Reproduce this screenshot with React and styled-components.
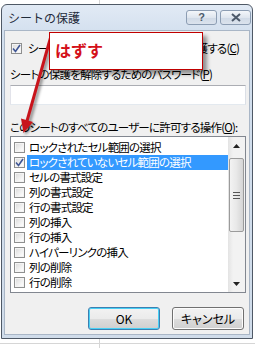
import React from "react";
import styled, { createGlobalStyle } from "styled-components";

const GlobalStyle = createGlobalStyle`
  html, body {
    margin: 0;
    padding: 0;
    background: #ffffff;
  }
  body {
    font-family: "Noto Sans CJK JP", "Liberation Sans", sans-serif;
  }
`;

const items = [
  { label: "ロックされたセル範囲の選択" },
  { label: "ロックされていないセル範囲の選択", checked: true, selected: true },
  { label: "セルの書式設定" },
  { label: "列の書式設定" },
  { label: "行の書式設定" },
  { label: "列の挿入" },
  { label: "行の挿入" },
  { label: "ハイパーリンクの挿入" },
  { label: "列の削除" },
  { label: "行の削除" },
];

const Tick = () => (
  <svg width="9" height="9" viewBox="0 0 9 9">
    <path d="M1 4.5 L3.5 7.5 L8 1" fill="none" stroke="#3f5695" strokeWidth="1.6" />
  </svg>
);

const Check = ({ checked }) => <CheckBox>{checked && <Tick />}</CheckBox>;

const App = () => {
  return (
    <Page>
      <GlobalStyle />
      <Window>
        <TitleBar>
          <Title>シートの保護</Title>
          <CaptionButtons>
            <CaptionButton>?</CaptionButton>
            <CaptionButton>
              <svg width="10" height="9" viewBox="0 0 10 9">
                <path d="M1 1 L9 8 M9 1 L1 8" stroke="#4d5a6b" strokeWidth="2" fill="none" />
              </svg>
            </CaptionButton>
          </CaptionButtons>
        </TitleBar>
        <Client>
          <ProtectRow>
            <Check checked />
            <Text>
              シートとロックされたセルの内容を保護する(<u>C</u>)
            </Text>
          </ProtectRow>
          <Label>
            シートの保護を解除するためのパスワード(<u>P</u>)
          </Label>
          <Input />
          <Label $gap={14}>
            このシートのすべてのユーザーに許可する操作(<u>O</u>):
          </Label>
          <ListBox>
            <Items>
              {items.map((it) => (
                <Item key={it.label}>
                  <Check checked={it.checked} />
                  <ItemText $selected={it.selected}>{it.label}</ItemText>
                </Item>
              ))}
            </Items>
            <ScrollBar>
              <ArrowBtn>
                <svg width="7" height="4" viewBox="0 0 7 4">
                  <path d="M0 4 L3.5 0 L7 4 Z" fill="#222" />
                </svg>
              </ArrowBtn>
              <Thumb>
                <Grip />
              </Thumb>
              <Spacer />
              <ArrowBtn>
                <svg width="7" height="4" viewBox="0 0 7 4">
                  <path d="M0 0 L3.5 4 L7 0 Z" fill="#222" />
                </svg>
              </ArrowBtn>
            </ScrollBar>
          </ListBox>
          <Buttons>
            <Button $default>OK</Button>
            <Button>キャンセル</Button>
          </Buttons>
        </Client>
      </Window>

      <Arrow width="70" height="140" viewBox="0 0 70 140">
        <line x1="51" y1="36" x2="27" y2="121" stroke="#c8141c" strokeWidth="3" />
        <polygon points="23.5,133 33,122 21,118.5" fill="#c8141c" />
      </Arrow>
      <Callout>はずす</Callout>
    </Page>
  );
};

const Page = styled.div`
  position: relative;
  width: 255px;
  height: 348px;
  overflow: hidden;
  background-color: #fff;
  background-image: linear-gradient(
      to bottom,
      transparent 343px,
      #d6d6d6 343px,
      #d6d6d6 344px,
      transparent 344px
    ),
    linear-gradient(
      to right,
      transparent 99px,
      #d6d6d6 99px,
      #d6d6d6 100px,
      transparent 100px
    );
  padding-top: 4px;
  box-sizing: border-box;
`;

const Window = styled.div`
  margin-left: 1px;
  width: 252px;
  height: 335px;
  box-sizing: border-box;
  border: 1px solid #4f5966;
  border-radius: 6px 6px 0 0;
  background: linear-gradient(to bottom, #e1eaf5 0px, #d2dfee 30px, #d0dcea 100%);
  display: flex;
  flex-direction: column;
`;

const TitleBar = styled.div`
  height: 25px;
  display: flex;
  align-items: center;
  justify-content: space-between;
  padding: 0 1px 0 6px;
`;

const Title = styled.div`
  font-size: 12px;
  color: #1f2b3a;
  margin-top: -1px;
`;

const CaptionButtons = styled.div`
  display: flex;
  gap: 3px;
  margin-top: -1px;
`;

const CaptionButton = styled.div`
  width: 31px;
  height: 15px;
  box-sizing: border-box;
  border: 1px solid #8c9db3;
  border-radius: 3px;
  background: linear-gradient(to bottom, #f3f6fa, #dfe6ef 50%, #cfd9e6 51%, #dbe3ed);
  display: flex;
  align-items: center;
  justify-content: center;
  font-family: "Liberation Sans", sans-serif;
  font-weight: bold;
  font-size: 11px;
  color: #4d5a6b;
`;

const Client = styled.div`
  flex: 1;
  margin: 0 2px 3px 2px;
  background: #f0f0f0;
  border: 1px solid #a9b6c6;
  padding: 0 4px 0 5px;
  display: flex;
  flex-direction: column;
`;

const Text = styled.span`
  font-size: 11.5px;
  font-feature-settings: "palt";
  letter-spacing: -0.8px;
  color: #000;
  white-space: nowrap;
`;

const ProtectRow = styled.div`
  display: flex;
  align-items: center;
  gap: 6px;
  margin: 9px 0 0 1px;
  height: 16px;
`;

const Label = styled(Text)`
  display: block;
  margin-top: ${(p) => p.$gap || 10}px;
  line-height: 16px;
`;

const Input = styled.div`
  margin-top: 3px;
  width: 236px;
  height: 20px;
  box-sizing: border-box;
  background: #fff;
  border: 1px solid #abadb3;
  border-color: #abadb3 #dbdfe6 #e3e9ef #e2e3ea;
`;

const CheckBox = styled.span`
  flex: none;
  width: 11px;
  height: 11px;
  box-sizing: border-box;
  border: 1px solid #8e8f8f;
  background: linear-gradient(135deg, #d9d9d9, #f7f7f7 70%, #fff);
  box-shadow: inset 0 0 0 1px #f4f4f4;
  display: flex;
  align-items: center;
  justify-content: center;
`;

const ListBox = styled.div`
  margin-top: 1px;
  width: 236px;
  height: 157px;
  box-sizing: border-box;
  border: 1px solid #828790;
  background: #fff;
  display: flex;
`;

const Items = styled.div`
  flex: 1;
  padding-top: 3px;
  display: flex;
  flex-direction: column;
`;

const Item = styled.div`
  height: 15px;
  display: flex;
  align-items: center;
  padding-left: 3px;
  gap: 2px;
`;

const ItemText = styled(Text)`
  flex: 1;
  height: 15px;
  line-height: 15px;
  padding-left: 2px;
  background: ${(p) => (p.$selected ? "#3399ff" : "transparent")};
  color: ${(p) => (p.$selected ? "#fff" : "#000")};
`;

const ScrollBar = styled.div`
  width: 17px;
  background: linear-gradient(to right, #e3e3e3, #f2f2f2 30%, #f2f2f2);
  display: flex;
  flex-direction: column;
  align-items: center;
`;

const ArrowBtn = styled.div`
  height: 17px;
  width: 17px;
  display: flex;
  align-items: center;
  justify-content: center;
`;

const Thumb = styled.div`
  margin-top: 4px;
  width: 15px;
  height: 74px;
  box-sizing: border-box;
  border: 1px solid #9b9b9b;
  border-radius: 2px;
  background: linear-gradient(to right, #f3f3f3, #e8e8e8 50%, #d5d5d5);
  display: flex;
  align-items: center;
  justify-content: center;
`;

const Grip = styled.div`
  width: 7px;
  height: 5px;
  border-top: 1px solid #555;
  border-bottom: 1px solid #555;
  background: linear-gradient(#555, #555) center / 100% 1px no-repeat;
`;

const Spacer = styled.div`
  flex: 1;
`;

const Buttons = styled.div`
  margin-top: 14px;
  display: flex;
  justify-content: flex-end;
  gap: 12px;
  padding-right: 1px;
`;

const Button = styled.div`
  width: 72px;
  height: 23px;
  box-sizing: border-box;
  border: 1px solid ${(p) => (p.$default ? "#3c7fb1" : "#707070")};
  border-radius: 3px;
  background: linear-gradient(to bottom, #f2f2f2, #ebebeb 50%, #dddddd 51%, #cfcfcf);
  box-shadow: ${(p) => (p.$default ? "inset 0 0 0 1px #48d0f5" : "inset 0 0 0 1px #fcfcfc")};
  display: flex;
  align-items: center;
  justify-content: center;
  font-size: 12px;
  font-feature-settings: "palt";
  color: #000;
`;

const Arrow = styled.svg`
  position: absolute;
  left: 0;
  top: 0;
  filter: drop-shadow(2px 2px 1.5px rgba(0, 0, 0, 0.45));
`;

const Callout = styled.div`
  position: absolute;
  left: 49px;
  top: 32px;
  width: 154px;
  height: 38px;
  box-sizing: border-box;
  border: 1px solid #c00000;
  background: #fff;
  box-shadow: 4px 4px 4px rgba(0, 0, 0, 0.4);
  padding: 5px 0 0 5px;
  font-size: 16px;
  font-weight: bold;
  color: #d4101a;
  line-height: 24px;
`;

export default App;
